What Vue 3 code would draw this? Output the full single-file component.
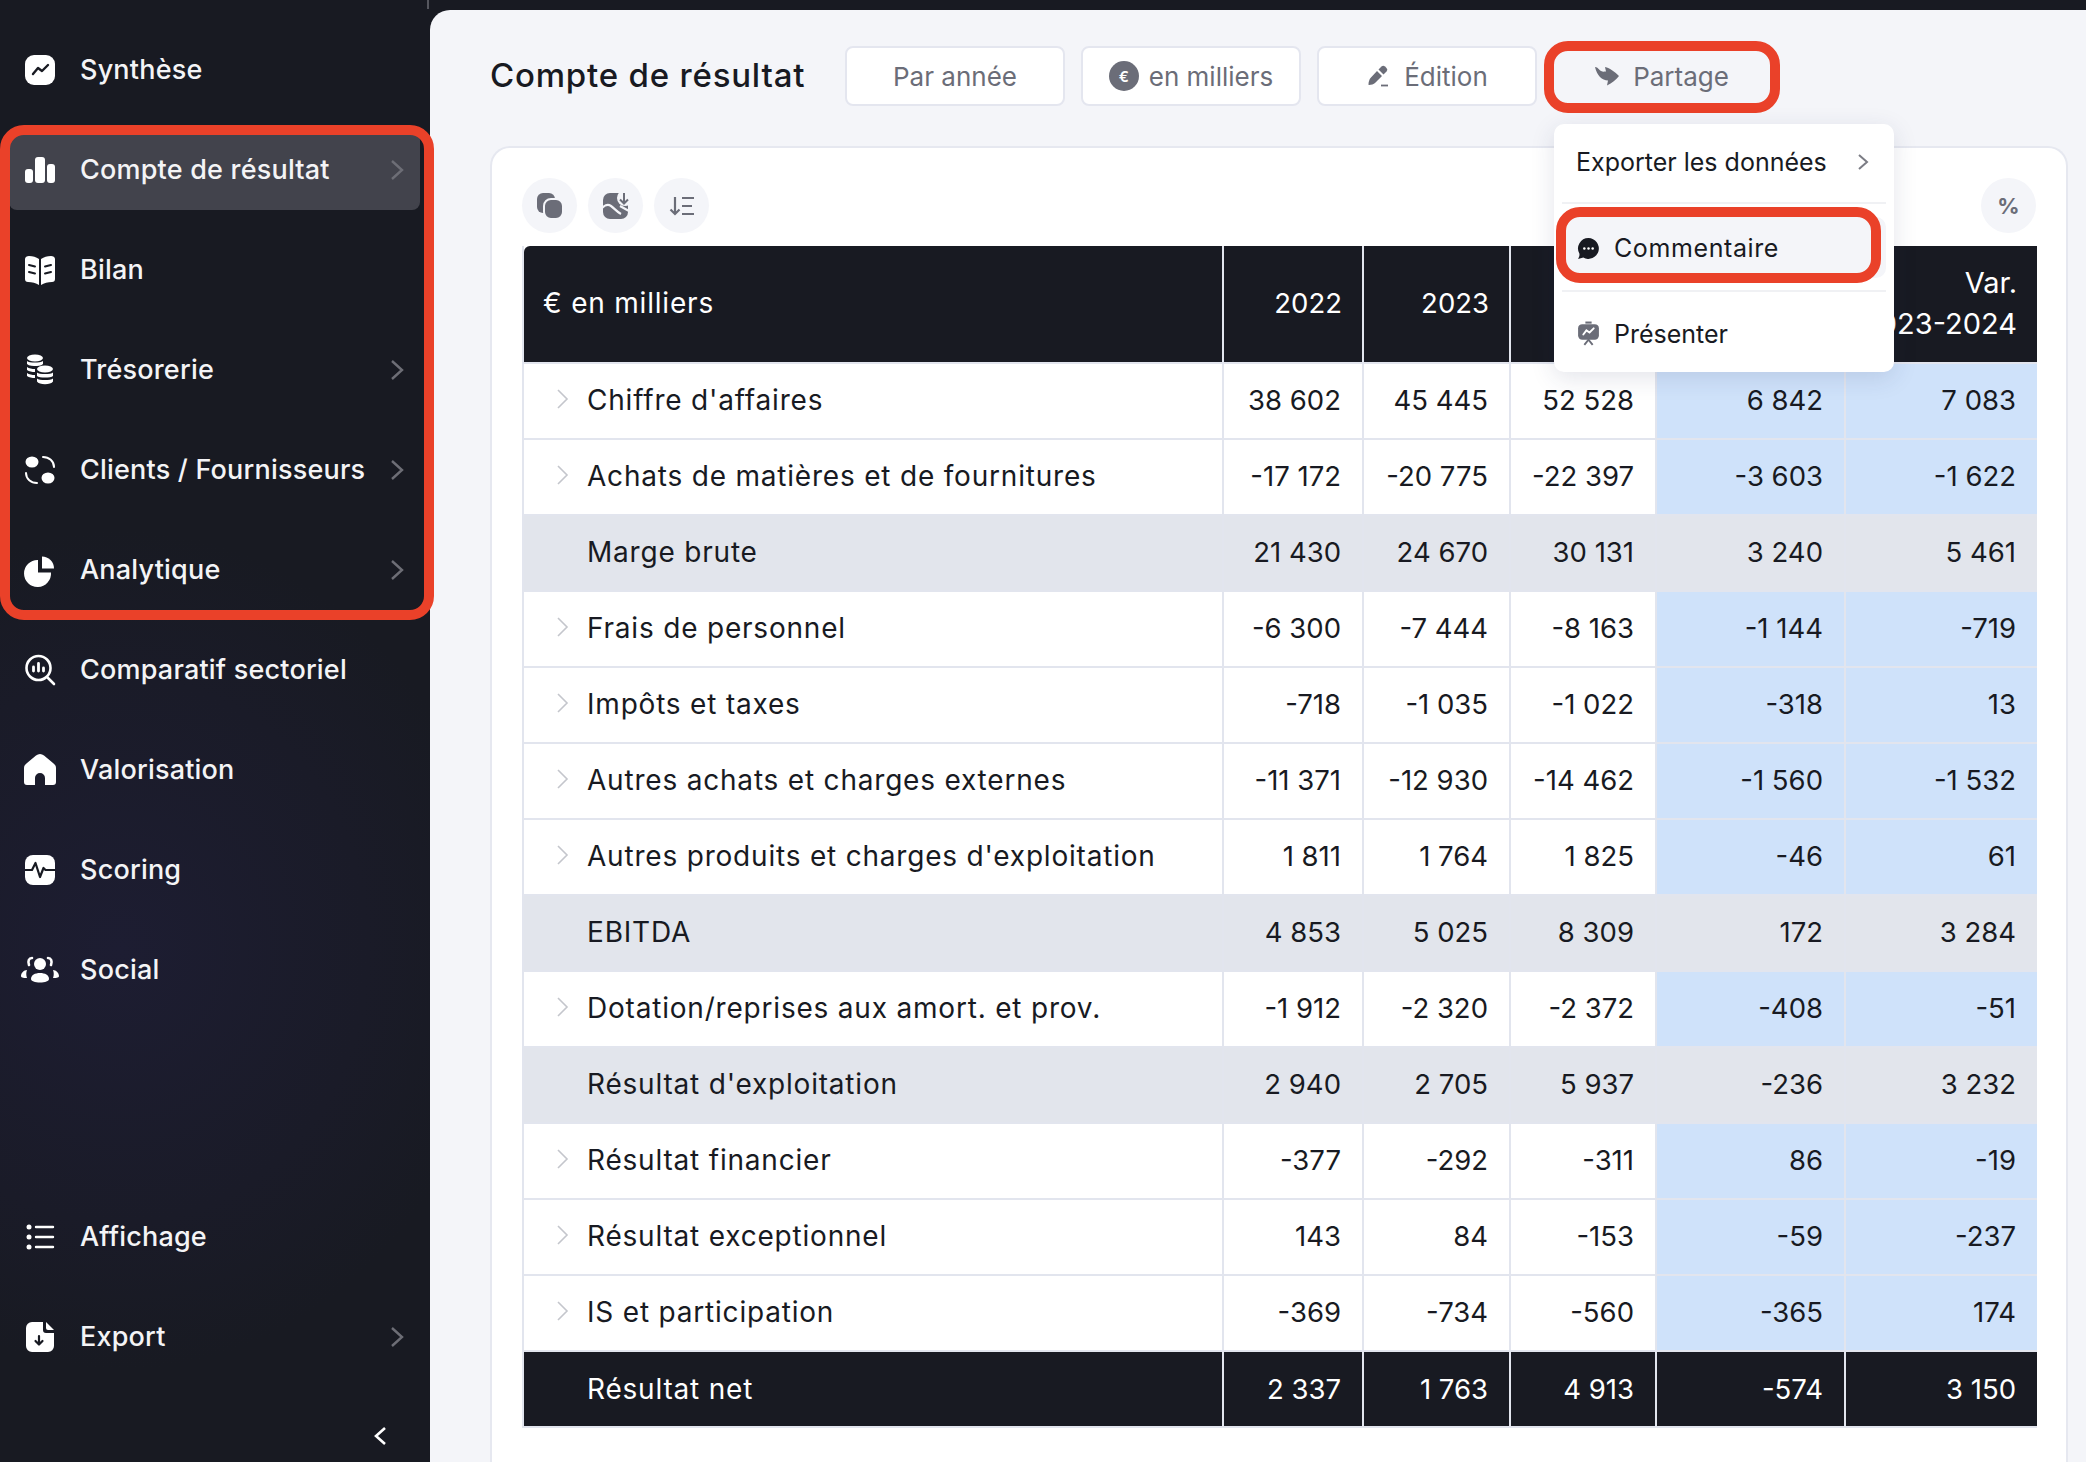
<script setup>
const topItems = [
  { label: "Synthèse", icon: "synth" },
  { label: "Compte de résultat", icon: "bars", active: true, more: true },
  { label: "Bilan", icon: "book" },
  { label: "Trésorerie", icon: "coins", more: true },
  { label: "Clients / Fournisseurs", icon: "clients", more: true },
  { label: "Analytique", icon: "pie", more: true },
  { label: "Comparatif sectoriel", icon: "search" },
  { label: "Valorisation", icon: "home" },
  { label: "Scoring", icon: "pulse" },
  { label: "Social", icon: "people" },
];
const bottomItems = [
  { label: "Affichage", icon: "list" },
  { label: "Export", icon: "export", more: true },
];

const rows = [
  { label: "Chiffre d'affaires", vals: ["38 602", "45 445", "52 528", "6 842", "7 083"] },
  { label: "Achats de matières et de fournitures", vals: ["-17 172", "-20 775", "-22 397", "-3 603", "-1 622"] },
  { label: "Marge brute", type: "sub", vals: ["21 430", "24 670", "30 131", "3 240", "5 461"] },
  { label: "Frais de personnel", vals: ["-6 300", "-7 444", "-8 163", "-1 144", "-719"] },
  { label: "Impôts et taxes", vals: ["-718", "-1 035", "-1 022", "-318", "13"] },
  { label: "Autres achats et charges externes", vals: ["-11 371", "-12 930", "-14 462", "-1 560", "-1 532"] },
  { label: "Autres produits et charges d'exploitation", vals: ["1 811", "1 764", "1 825", "-46", "61"] },
  { label: "EBITDA", type: "sub", vals: ["4 853", "5 025", "8 309", "172", "3 284"] },
  { label: "Dotation/reprises aux amort. et prov.", vals: ["-1 912", "-2 320", "-2 372", "-408", "-51"] },
  { label: "Résultat d'exploitation", type: "sub", vals: ["2 940", "2 705", "5 937", "-236", "3 232"] },
  { label: "Résultat financier", vals: ["-377", "-292", "-311", "86", "-19"] },
  { label: "Résultat exceptionnel", vals: ["143", "84", "-153", "-59", "-237"] },
  { label: "IS et participation", vals: ["-369", "-734", "-560", "-365", "174"] },
  { label: "Résultat net", type: "total", vals: ["2 337", "1 763", "4 913", "-574", "3 150"] },
];
</script>

<template>
  <div class="page">
    <aside class="sidebar">
      <span class="tick"></span>
      <nav class="nav">
        <a v-for="item in topItems" :key="item.label" class="nav-item" :class="{ active: item.active }">
          <svg class="nav-icon" viewBox="0 0 32 32" fill="#fff">
            <template v-if="item.icon === 'synth'">
              <rect x="1" y="1" width="30" height="30" rx="9" />
              <path d="M9 20l5-6 4 3 6-6" fill="none" stroke="#181a22" stroke-width="2.4" stroke-linecap="round" stroke-linejoin="round" />
            </template>
            <template v-if="item.icon === 'bars'">
              <rect x="1" y="15" width="8" height="14" rx="3" />
              <rect x="11" y="3" width="10" height="26" rx="3" />
              <rect x="23" y="10" width="8" height="19" rx="3" />
            </template>
            <template v-if="item.icon === 'book'">
              <path d="M1 5c0-2 2-3 4-3 4 0 7 1 10 3v26c-3-2-7-3-11-3-2 0-3-1-3-3z" />
              <path d="M31 5c0-2-2-3-4-3-4 0-7 1-10 3v26c3-2 7-3 11-3 2 0 3-1 3-3z" />
              <path d="M5 11l6 1.500M5 18l6 1.500M27 11l-6 1.500M27 18l-6 1.500" stroke="#181a22" stroke-width="2" stroke-linecap="round" />
            </template>
            <template v-if="item.icon === 'coins'">
              <ellipse cx="11" cy="4" rx="8" ry="3.500" />
              <path d="M3 7c2 2 13 2 16 0v3c-2 1.500-3 1.500-6 2-4 0-8 0-10-2zM3 13c2 1.500 5 2 8 2v3c-3 0-6-.5-8-2zM3 19c2 1.500 5 2 8 2v3c-3 0-6-.5-8-2z" />
              <ellipse cx="21" cy="15" rx="8" ry="3.500" />
              <path d="M13 18.500c2 2 14 2 16 0v3.500c-2 2-14 2-16 0zM13 24.500c2 2 14 2 16 0v3c-2 3.500-14 3.500-16 0z" />
            </template>
            <template v-if="item.icon === 'clients'">
              <ellipse cx="8" cy="8" rx="6.500" ry="5.500" />
              <ellipse cx="24" cy="24" rx="6.500" ry="5.500" />
              <path d="M19 3c6 0 11 4 11 10M2 19c0 6 5 10 11 10" fill="none" stroke="#fff" stroke-width="2" stroke-linecap="round" />
            </template>
            <template v-if="item.icon === 'pie'">
              <path d="M14 6v12.500h13A13.500 13.500 0 1 1 14 6z" />
              <path d="M18 2.500A12 12 0 0 1 30 14.500H18z" />
            </template>
            <template v-if="item.icon === 'search'">
              <circle cx="14.500" cy="14" r="12" fill="none" stroke="#fff" stroke-width="2.600" />
              <path d="M24 24l6 6" stroke="#fff" stroke-width="2.600" stroke-linecap="round" />
              <path d="M9.500 13v4M14.500 9.500v7.500M19.500 14v3" stroke="#fff" stroke-width="2.800" stroke-linecap="round" />
            </template>
            <template v-if="item.icon === 'home'">
              <path d="M0 14c0-2 1-3.500 3-5l9-7.500c2.500-2 5.500-2 8 0l9 7.500c2 1.500 3 3 3 5v14a3 3 0 0 1-3 3h-8v-7a5 5 0 0 0-10 0v7h-8a3 3 0 0 1-3-3z" />
            </template>
            <template v-if="item.icon === 'pulse'">
              <rect x="1" y="1" width="30" height="30" rx="8" />
              <path d="M1 16h7l3.500-7 4.500 14 3.500-9 2 2h10" fill="none" stroke="#181a22" stroke-width="2.200" stroke-linejoin="round" />
            </template>
            <template v-if="item.icon === 'people'">
              <circle cx="16" cy="10" r="6" />
              <path d="M7 25c0-4 4-6 9-6s9 2 9 6c0 2-4 3.500-9 3.500s-9-1.500-9-3.500z" />
              <path d="M8 4c-3 0-4.500 3-3 7M24 4c3 0 4.500 3 3 7" fill="none" stroke="#fff" stroke-width="2.600" stroke-linecap="round" />
              <path d="M-3 22c0-3 3-6 6-6-1 3-1 5 0 8-2 0-6 0-6-2zM35 22c0-3-3-6-6-6 1 3 1 5 0 8 2 0 6 0 6-2z" />
            </template>
          </svg>
          <span class="nav-label">{{ item.label }}</span>
          <svg v-if="item.more" class="nav-more" viewBox="0 0 14 20"><path d="M2 1l10 9-10 9" fill="none" stroke="#6d6e76" stroke-width="2.400" /></svg>
        </a>
      </nav>
      <nav class="nav nav-bottom">
        <a v-for="item in bottomItems" :key="item.label" class="nav-item">
          <svg class="nav-icon" viewBox="0 0 32 32" fill="#fff">
            <template v-if="item.icon === 'list'">
              <circle cx="5" cy="6" r="2.500" />
              <circle cx="5" cy="16" r="2.500" />
              <circle cx="5" cy="26" r="2.500" />
              <path d="M12 6h17M12 16h17M12 26h17" stroke="#fff" stroke-width="2.400" stroke-linecap="round" />
            </template>
            <template v-if="item.icon === 'export'">
              <path d="M8 1h11v8a3 3 0 0 0 3 3h8v13a6 6 0 0 1-6 6H8a6 6 0 0 1-6-6V7a6 6 0 0 1 6-6z" />
              <path d="M22 1l8 8h-6a2 2 0 0 1-2-2z" />
              <path d="M15 15v8M11.500 20l3.500 3.500 3.500-3.500" fill="none" stroke="#181a22" stroke-width="2.200" stroke-linecap="round" stroke-linejoin="round" />
            </template>
          </svg>
          <span class="nav-label">{{ item.label }}</span>
          <svg v-if="item.more" class="nav-more" viewBox="0 0 14 20"><path d="M2 1l10 9-10 9" fill="none" stroke="#6d6e76" stroke-width="2.400" /></svg>
        </a>
      </nav>
      <div class="collapse">
        <svg viewBox="0 0 14 20" width="14" height="20"><path d="M12 2L3 10l9 8" fill="none" stroke="#fff" stroke-width="2.600" /></svg>
      </div>
      <div class="mark mark-nav"></div>
    </aside>

    <main class="main">
      <header class="head">
        <h1 class="title">Compte de résultat</h1>
        <button class="btn">Par année</button>
        <button class="btn"><span class="euro">€</span>en milliers</button>
        <button class="btn">
          <svg class="btn-icon" viewBox="0 0 24 24" fill="#6b6d78">
            <path d="M15.500 2.500a2.500 2.500 0 0 1 3.500 0l1.500 1.500a2.500 2.500 0 0 1 0 3.500L17.500 10.500l-5-5z" />
            <path d="M11 7l5 5-7 7c-1 1-4 2-6 2-.5 0-.5-.5-.5-1 0-2 1-5 2-6z" />
            <path d="M15 21.500h7" stroke="#6b6d78" stroke-width="1.800" />
          </svg>
          Édition
        </button>
        <div class="share">
          <button class="btn btn-flat">
            <svg class="btn-icon" viewBox="0 0 24 24" fill="#6b6d78">
              <path d="M0 3c3 0 4 3 6 4 2 1 3 .5 5 .5l-1-4.500c5 1 10 5 14 9-3 4-7 7-12 9.500l1-5c-6 0-11-5-13-13.500z" />
            </svg>
            Partage
          </button>
          <span class="mark mark-share"></span>
          <div class="menu">
            <div class="menu-row menu-row-first">
              <span>Exporter les données</span>
              <svg class="menu-more" viewBox="0 0 14 20"><path d="M3 3l8 7-8 7" fill="none" stroke="#7b7c84" stroke-width="2" /></svg>
            </div>
            <div class="menu-row menu-row-on">
              <svg class="menu-icon" viewBox="0 0 24 24">
                <path d="M12 2a10 10 0 1 1-5 18.700L2 22c1-1.500 1.500-3 1.300-5A10 10 0 0 1 12 2z" fill="#181a22" />
                <circle cx="8" cy="12" r="1.200" fill="#fff" /><circle cx="12" cy="12" r="1.200" fill="#fff" /><circle cx="16" cy="12" r="1.200" fill="#fff" />
              </svg>
              <span>Commentaire</span>
              <span class="mark mark-comment"></span>
            </div>
            <div class="menu-row menu-row-last">
              <svg class="menu-icon" viewBox="0 0 24 24">
                <rect x="2" y="3" width="20" height="15" rx="4" fill="#6b6d78" />
                <path d="M9 1.500h6" stroke="#6b6d78" stroke-width="2" />
                <path d="M7 13l3-4 3 2 4-4" fill="none" stroke="#fff" stroke-width="1.800" stroke-linecap="round" />
                <path d="M8 23l4-5 4 5" fill="none" stroke="#6b6d78" stroke-width="1.800" />
              </svg>
              <span>Présenter</span>
            </div>
          </div>
        </div>
      </header>

      <section class="card">
        <div class="tools">
          <span class="round">
            <svg viewBox="0 0 26 26" width="26" height="26" fill="#6b6d78">
              <rect x="0" y="0" width="18" height="20" rx="6" />
              <rect x="7" y="6" width="19" height="20" rx="7" stroke="#f4f5f9" stroke-width="2" />
            </svg>
          </span>
          <span class="round">
            <svg viewBox="0 0 26 26" width="26" height="26" fill="#6b6d78">
              <rect x="0" y="0" width="25" height="26" rx="7" />
              <circle cx="22" cy="5" r="8" fill="#f4f5f9" />
              <path d="M21 0v10M17 6.500l4 4 4-4" fill="none" stroke="#6b6d78" stroke-width="2" />
              <path d="M-1 15c3-3 6-4 9-2 3 2 6 6 10 8M17 13l9 5" fill="none" stroke="#f4f5f9" stroke-width="2.200" />
            </svg>
          </span>
          <span class="round">
            <svg viewBox="0 0 26 26" width="26" height="26" fill="none" stroke="#6b6d78" stroke-width="2.200">
              <path d="M6 4v17M1.500 16.500L6 21l4.500-4.500M13 5h12M13 13h10M13 21h12" />
            </svg>
          </span>
          <span class="round round-right">%</span>
        </div>

        <table class="grid">
          <colgroup>
            <col style="width: 700px" /><col style="width: 140px" /><col style="width: 147px" />
            <col style="width: 146px" /><col style="width: 189px" /><col style="width: 191px" />
          </colgroup>
          <thead>
            <tr>
              <th class="label">€ en milliers</th>
              <th>2022</th>
              <th>2023</th>
              <th>2024</th>
              <th class="var">Var.<br />2022-2023</th>
              <th class="var">Var.<br />2023-2024</th>
            </tr>
          </thead>
          <tbody>
            <tr v-for="row in rows" :key="row.label" :class="row.type">
              <td class="name">
                <svg v-if="!row.type" class="row-more" viewBox="0 0 14 20"><path d="M2 1l9 9-9 9" fill="none" stroke="#c4c6cc" stroke-width="1.600" /></svg>
                {{ row.label }}
              </td>
              <td v-for="(v, i) in row.vals" :key="i" :class="{ blue: i > 2 && !row.type }">{{ v }}</td>
            </tr>
          </tbody>
        </table>
      </section>
    </main>
  </div>
</template>

<style>
html,
body {
  margin: 0;
  overflow: hidden;
  background: #181a22;
}
</style>

<style scoped>
.page {
  display: flex;
  height: 100vh;
  background: #181a22;
  font-family: Inter, "Open Sans", sans-serif;
}

/* sidebar */
.sidebar {
  position: relative;
  width: 430px;
  flex: none;
  box-sizing: border-box;
  display: flex;
  flex-direction: column;
  padding: 32px 0 0 9px;
  background: radial-gradient(ellipse 380px 420px at 120px 950px, #1d1d32 0%, #1a1b28 65%, #181a22 100%);
}
.tick {
  position: absolute;
  top: 0;
  right: 1px;
  width: 2px;
  height: 9px;
  background: #55565e;
}
.nav {
  display: flex;
  flex-direction: column;
  gap: 25px;
}
.nav-bottom {
  margin-top: auto;
}
.nav-item {
  display: flex;
  align-items: center;
  width: 411px;
  height: 75px;
  box-sizing: border-box;
  padding: 0 16px 0 15px;
  border-radius: 8px;
  color: #f4f4f6;
  font-size: 27px;
  font-weight: 500;
  letter-spacing: 0.2px;
}
.nav-item.active {
  background: #42434c;
  box-shadow: 0 3px 0 #42434c;
}
.nav-icon {
  width: 32px;
  height: 32px;
  flex: none;
  overflow: visible;
}
.nav-label {
  margin-left: 24px;
  white-space: nowrap;
}
.nav-more {
  width: 14px;
  height: 20px;
  margin-left: auto;
}
.collapse {
  display: flex;
  justify-content: flex-end;
  padding: 52px 43px 16px 0;
}

/* red marks */
.mark {
  position: absolute;
  box-sizing: border-box;
  border: 10px solid #ea4129;
  pointer-events: none;
}
.mark-nav {
  left: 0;
  top: 125px;
  width: 434px;
  height: 495px;
  border-radius: 24px;
  z-index: 5;
}
.mark-share {
  left: -10px;
  top: -9px;
  width: 236px;
  height: 72px;
  border-radius: 24px;
}
.mark-comment {
  left: -6px;
  top: -10px;
  width: 325px;
  height: 76px;
  border-radius: 24px;
}

/* main */
.main {
  flex: 1;
  min-width: 0;
  display: flex;
  flex-direction: column;
  margin-top: 10px;
  box-sizing: border-box;
  padding: 36px 18px 0 60px;
  border-top-left-radius: 20px;
  background: #f4f5f9;
}
.head {
  display: flex;
  align-items: center;
  gap: 16px;
}
.title {
  width: 339px;
  margin: -2px 0 0;
  color: #181a22;
  font-size: 33px;
  font-weight: 500;
  letter-spacing: 0.8px;
  white-space: nowrap;
}
.btn {
  display: flex;
  align-items: center;
  justify-content: center;
  gap: 10px;
  width: 220px;
  height: 60px;
  box-sizing: border-box;
  border: 2px solid #e4e6ef;
  border-radius: 8px;
  background: #fff;
  color: #6b6d78;
  font: inherit;
  font-size: 26px;
}
.btn-flat {
  width: 216px;
  height: 52px;
  border: 0;
  background: none;
}
.btn-icon {
  width: 24px;
  height: 24px;
  margin-right: 4px;
}
.euro {
  display: flex;
  align-items: center;
  justify-content: center;
  width: 30px;
  height: 30px;
  border-radius: 50%;
  background: #6b6d78;
  color: #fff;
  font-size: 15px;
  font-weight: 600;
}
.share {
  position: relative;
  z-index: 4;
  margin-left: 1px;
}
.menu {
  position: absolute;
  left: 0;
  top: 74px;
  width: 340px;
  height: 248px;
  box-sizing: border-box;
  padding: 0 8px;
  border-radius: 10px;
  background: #fff;
  box-shadow: 0 6px 24px rgba(40, 50, 90, 0.13);
  color: #181a22;
  font-size: 25px;
}
.menu-row {
  position: relative;
  display: flex;
  align-items: center;
  height: 80px;
  box-sizing: border-box;
  padding: 0 14px;
  border-bottom: 2px solid #f0f1f4;
}
.menu-row-first {
  padding-bottom: 2px;
}
.menu-row-last {
  border-bottom: 0;
  padding-top: 5px;
}
.menu-row-on {
  height: 61px;
  margin: 13px 0;
  padding-top: 1px;
  border: 0;
  border-radius: 10px;
  background: #f4f5f9;
  letter-spacing: 0.6px;
}
.menu-row-on::after {
  content: "";
  position: absolute;
  left: 0;
  right: 0;
  bottom: -14px;
  height: 2px;
  background: #f0f1f4;
}
.menu-more {
  width: 14px;
  height: 20px;
  margin-left: auto;
  margin-right: 2px;
}
.menu-icon {
  width: 25px;
  height: 25px;
  margin-right: 13px;
  flex: none;
}

/* card */
.card {
  flex: 1;
  margin-top: 40px;
  box-sizing: border-box;
  padding: 30px 30px 0;
  border: 2px solid #e6e8f0;
  border-bottom: 0;
  border-radius: 20px 20px 0 0;
  background: #fff;
  min-height: 0;
}
.tools {
  display: flex;
  gap: 11px;
  margin-bottom: 13px;
}
.round {
  display: flex;
  align-items: center;
  justify-content: center;
  width: 55px;
  height: 55px;
  border-radius: 50%;
  background: #f4f5f9;
  color: #6b6d78;
  font-size: 22px;
  font-weight: 700;
}
.round-right {
  margin-left: auto;
}

/* table */
.grid {
  width: 1513px;
  table-layout: fixed;
  border-collapse: separate;
  border-spacing: 0;
  color: #181a22;
  font-size: 27.5px;
  border-left: 2px solid #e2e5ee;
}
th,
td {
  box-sizing: border-box;
  height: 76px;
  padding: 0 21px 2px 0;
  border-right: 2px solid #e2e5ee;
  border-top: 2px solid #e2e5ee;
  text-align: right;
  white-space: nowrap;
  font-weight: 400;
}
th:last-child,
td:last-child {
  border-right: 0;
}
th {
  height: 116px;
  border-top: 0;
  padding-right: 20px;
  background: #181a22;
  color: #fff;
  line-height: 41px;
}
th.var {
  font-size: 29px;
}
th.label {
  padding-left: 19px;
  text-align: left;
  font-size: 28px;
  letter-spacing: 0.8px;
  border-top-left-radius: 6px;
}
td.name {
  position: relative;
  padding-left: 63px;
  text-align: left;
  font-size: 28px;
  letter-spacing: 0.8px;
}
.row-more {
  position: absolute;
  left: 32px;
  top: 25px;
  width: 14px;
  height: 20px;
}
.blue {
  background: #cfe2fa;
}
.sub td {
  background: #e2e5ec;
}
.total td {
  height: 78px;
  padding-bottom: 0;
  border-bottom: 2px solid #e2e5ee;
  background: #181a22;
  color: #fff;
}
</style>
